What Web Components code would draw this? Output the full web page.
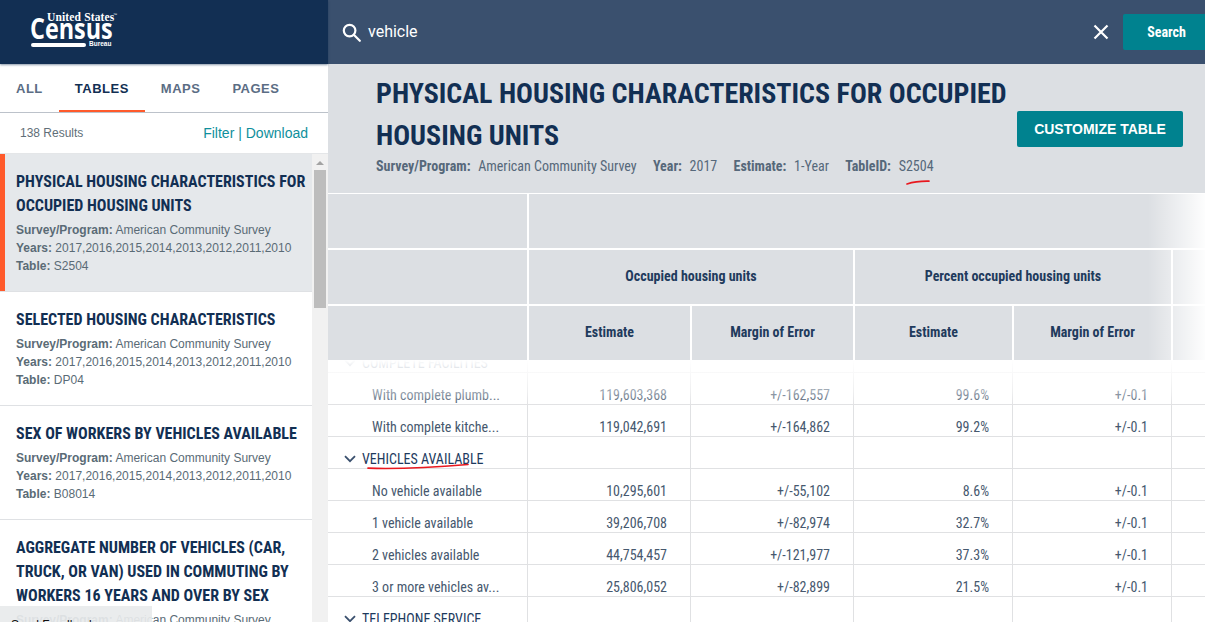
<!DOCTYPE html>
<html lang="en"><head><meta charset="utf-8"><title>Census</title>
<style>
html,body{margin:0;height:622px;overflow:hidden;background:#fff}
body{font-family:"Liberation Sans",sans-serif}
census-app{height:622px}
</style></head><body>
<census-app>
<census-logo slot="logo"></census-logo>
<search-bar slot="search" value="vehicle"></search-bar>
<result-tabs slot="tabs"></result-tabs>
<result-list slot="list">
 <result-card selected title-text="PHYSICAL HOUSING CHARACTERISTICS FOR OCCUPIED HOUSING UNITS" table="S2504"></result-card>
 <result-card title-text="SELECTED HOUSING CHARACTERISTICS" table="DP04"></result-card>
 <result-card title-text="SEX OF WORKERS BY VEHICLES AVAILABLE" table="B08014"></result-card>
 <result-card title-text="AGGREGATE NUMBER OF VEHICLES (CAR, TRUCK, OR VAN) USED IN COMMUTING BY WORKERS 16 YEARS AND OVER BY SEX" table="B08015"></result-card>
</result-list>
<table-heading slot="main"></table-heading>
<data-table slot="main"></data-table>
</census-app>
<script>
const CONDENSED='font-family:Roboto,sans-serif;font-stretch:75%;';
function shadow(el,html){el.attachShadow({mode:'open'}).innerHTML=html}
customElements.define('census-app',class extends HTMLElement{constructor(){super();shadow(this,`<style>
:host{display:grid;grid-template-columns:328px 1fr;grid-template-rows:64px 1fr;width:1205px;overflow:hidden;position:relative}
.logo{background:#122f53;box-shadow:0 1px 2px rgba(18,47,83,.5);z-index:1}
.search{background:#3a506e}
aside{display:flex;flex-direction:column;min-height:0;overflow:hidden}
main{min-width:0;min-height:0;overflow:hidden;background:#fff;display:flex;flex-direction:column}
.fb{position:absolute;left:0;bottom:0;width:152px;height:16px;background:rgba(232,234,236,.92);font:12px/12px "Liberation Sans",sans-serif;color:#111;overflow:hidden;z-index:3}
.fb span{display:block;padding:13px 0 0 11px}
</style>
<div class="logo"><slot name="logo"></slot></div><div class="search"><slot name="search"></slot></div>
<aside><slot name="tabs"></slot><slot name="list"></slot></aside><main><slot name="main"></slot></main>
<div class="fb"><span>Send Feedback</span></div>`)}});
customElements.define('census-logo',class extends HTMLElement{constructor(){super();shadow(this,`<style>
:host{display:block;position:relative;height:64px;color:#fff}
span{position:absolute;white-space:nowrap}
.us{left:47px;top:10px;font:bold 11.5px/14px "Liberation Serif",serif;letter-spacing:.15px}
.tm{left:113px;top:12px;font:4px/5px "Liberation Sans",sans-serif}
.c{left:30px;top:8px;font:bold 28px/40px "Open Sans",sans-serif;transform:scaleX(.835);transform-origin:left}
.bar{position:absolute;left:31px;top:43px;width:55px;height:4px;background:#fff;border-radius:2px}
.b{left:89px;top:40px;font:bold 6.5px/8px "Liberation Sans",sans-serif}
</style><span class="c">Census</span><span class="us">United States</span><span class="tm">™</span><i class="bar"></i><span class="b">Bureau</span>`)}});
customElements.define('search-bar',class extends HTMLElement{constructor(){super();shadow(this,`<style>
:host{display:flex;align-items:center;height:64px;padding-left:14px;color:#fff}
svg{flex:none}
.v{margin-left:7px;flex:1;font:16px/20px Roboto,sans-serif;color:#fff}
.x{margin-right:14px;display:block}
button{all:unset;box-sizing:border-box;width:82px;height:36px;padding-left:5px;background:#00828f;border-radius:2px 0 0 2px;text-align:center;color:#fff;${CONDENSED}font-weight:700;font-size:14px;line-height:32px}
</style>
<svg width="19" height="19" viewBox="0 0 19 19" fill="none" stroke="#fff" stroke-width="2.2"><circle cx="7.6" cy="7.6" r="5.8"/><path d="M11.8 11.8l6 6" stroke-linecap="round"/></svg>
<span class="v">${this.getAttribute('value')}</span>
<svg class="x" width="16" height="16" viewBox="0 0 16 16" stroke="#fff" stroke-width="2.2"><path d="M1.5 1.5l13 13M14.5 1.5l-13 13"/></svg>
<button>Search</button>`)}});
customElements.define('result-tabs',class extends HTMLElement{constructor(){super();shadow(this,`<style>
:host{display:block;background:#fff}
nav{display:flex;height:49px;box-sizing:border-box;border-bottom:1px solid #bcc2ca}
a{padding:18px 16px 0;box-sizing:border-box;height:48px;font:bold 13px/14px "Liberation Sans",sans-serif;letter-spacing:.5px;color:#5b6d84}
a.on{color:#122f53;border-bottom:2px solid #ff5a2b}
.r{display:flex;justify-content:space-between;align-items:center;height:41px;padding:0 20px;border-bottom:1px solid #e4e6e8;box-sizing:border-box}
.n{font-size:12px;color:#5f6f78}
.l{font-size:14px;color:#0f8f9c}
</style><nav><a>ALL</a><a class="on">TABLES</a><a>MAPS</a><a>PAGES</a></nav>
<div class="r"><span class="n">138 Results</span><span class="l">Filter | Download</span></div>`)}});
customElements.define('result-list',class extends HTMLElement{constructor(){super();shadow(this,`<style>
:host{display:flex;height:468px;overflow:hidden}
.items{flex:1;min-width:0}
.sb{width:16px;flex:none;background:#f1f1f1;display:flex;flex-direction:column;align-items:center}
.up{width:0;height:0;border:4px solid transparent;border-top:0;border-bottom:4px solid #a3a3a3;margin:7px 0 5px}
.th{width:12px;height:138px;background:#bdbdbd}
</style><div class="items"><slot></slot></div><div class="sb"><i class="up"></i><i class="th"></i></div>`)}});
customElements.define('result-card',class extends HTMLElement{constructor(){super();shadow(this,`<style>
:host{display:block;background:#fff;border-bottom:1px solid #dfe1e4;padding:16px 4px 16px 16px;color:#5a6b76;position:relative}
:host([selected]){background:#e5e8eb}
:host([selected])::before{content:"";position:absolute;left:0;top:0;bottom:0;width:5px;background:#ff5a2b}
h3{margin:0 0 3px;${CONDENSED}font-weight:700;font-size:16px;line-height:24px;color:#122f53}
p{margin:0;font-size:12px;line-height:18px;white-space:nowrap}
b{font-weight:700}
</style><h3>${this.getAttribute('title-text')}</h3>
<p><b>Survey/Program:</b> American Community Survey</p>
<p><b>Years:</b> 2017,2016,2015,2014,2013,2012,2011,2010</p>
<p><b>Table:</b> ${this.getAttribute('table')}</p>`)}});
customElements.define('table-heading',class extends HTMLElement{constructor(){super();shadow(this,`<style>
:host{display:flex;flex:none;box-sizing:border-box;height:129px;background:#dcdfe3;padding:9px 22px 0 48px;gap:4px;position:relative}
.t{flex:1;min-width:0}
h1{margin:0;${CONDENSED}font-weight:700;font-size:28px;line-height:42px;color:#122f53}
.m{display:flex;gap:16.3px;${CONDENSED}font-size:14px;line-height:18px;color:#56687a;white-space:nowrap}
.m b{margin-right:4.5px}
.m span{position:relative}
svg{position:absolute;left:7px;top:22px}
button{all:unset;flex:none;box-sizing:border-box;width:166px;height:36px;margin-top:38px;background:#00828f;border-radius:2px;color:#fff;text-align:center;font:bold 14px/36px "Liberation Sans",sans-serif}
</style><div class="t"><h1>PHYSICAL HOUSING CHARACTERISTICS FOR OCCUPIED HOUSING UNITS</h1>
<div class="m"><span><b>Survey/Program:</b> American Community Survey</span><span><b>Year:</b> 2017</span><span><b>Estimate:</b> 1-Year</span><span><b>TableID:</b> <span>S2504<svg width="26" height="6" viewBox="0 0 26 6" fill="none"><path d="M1 4C6 2.4 14 1 23 1.2" stroke="#e8181f" stroke-width="1.7" stroke-linecap="round"/></svg></span></span></div></div>
<button>CUSTOMIZE TABLE</button>`)}});
const ROWS=[
 ['s','COMPLETE FACILITIES'],
 ['r','With complete plumb...','119,603,368','+/-162,557','99.6%','+/-0.1'],
 ['r','With complete kitche...','119,042,691','+/-164,862','99.2%','+/-0.1'],
 ['s','VEHICLES AVAILABLE'],
 ['r','No vehicle available','10,295,601','+/-55,102','8.6%','+/-0.1'],
 ['r','1 vehicle available','39,206,708','+/-82,974','32.7%','+/-0.1'],
 ['r','2 vehicles available','44,754,457','+/-121,977','37.3%','+/-0.1'],
 ['r','3 or more vehicles av...','25,806,052','+/-82,899','21.5%','+/-0.1'],
 ['s','TELEPHONE SERVICE']];
const CHEV='<svg width="12" height="8" viewBox="0 0 12 8" fill="none" stroke="#3a506e" stroke-width="1.8"><path d="M1 1.2l5 5 5-5"/></svg>';
customElements.define('data-table',class extends HTMLElement{constructor(){super();
 const body=ROWS.map(r=>{
  if(r[0]==='s'){const mark=r[1]==='VEHICLES AVAILABLE'?'<svg class="ink" width="102" height="7" viewBox="0 0 102 7" fill="none"><path d="M1 5.2C25 6 65 4.5 101 1.5" stroke="#e8181f" stroke-width="1.7" stroke-linecap="round"/></svg>':'';
   return `<div class="c sec">${CHEV}<span class="lb">${r[1]}${mark}</span></div><div class="c"></div><div class="c"></div><div class="c"></div><div class="c"></div><div class="c"></div>`}
  return `<div class="c lab">${r[1]}</div>`+r.slice(2).map(v=>`<div class="c num">${v}</div>`).join('')+'<div class="c"></div>'}).join('');
 shadow(this,`<style>
:host{display:block;position:relative;flex:1;min-height:0;margin-top:1px;${CONDENSED}font-size:14px;overflow:hidden}
.g{display:grid}
.h{grid-template-columns:199px 161px 161px 157px 157px 1fr;gap:2px;background:#fff;grid-template-rows:54px 54px 54px;position:relative;z-index:2;height:166px}
.h div{background:#dcdfe3;display:flex;align-items:center;justify-content:center;font-weight:700;color:#1f3b5d;padding-bottom:2px;box-sizing:border-box}
.s5{grid-column:2/7}.s2{grid-column:span 2}
.fade{position:absolute;top:0;right:0;width:57px;height:166px;background:linear-gradient(90deg,rgba(255,255,255,0),rgba(255,255,255,.95));z-index:3}
.wrap{height:262px;overflow:hidden;position:relative}
.b{grid-template-columns:199px 162px 162px 158px 158px 1fr;gap:1px;background:#e0e1e3;grid-auto-rows:31px;margin-top:-19px}
.c{background:#fff;color:#46586e;line-height:18px;align-self:stretch;display:flex;align-items:flex-end;white-space:nowrap}
.lab{padding-left:44px}
.num{justify-content:flex-end;padding-right:23px}
.sec{padding-left:16px;gap:6px;color:#1d3a5e}
.sec svg:first-child{margin-bottom:5px}
.lb{position:relative}
.ink{position:absolute;left:5px;top:13px}
.top{position:absolute;left:0;right:0;top:0;height:46px;background:linear-gradient(180deg,#fff 0,rgba(255,255,255,.85) 20%,rgba(255,255,255,.45) 70%,rgba(255,255,255,0) 100%);pointer-events:none}
</style>
<div class="g h"><div></div><div class="s5"></div>
<div></div><div class="s2">Occupied housing units</div><div class="s2">Percent occupied housing units</div><div></div>
<div></div><div>Estimate</div><div>Margin of Error</div><div>Estimate</div><div>Margin of Error</div><div></div></div>
<div class="fade"></div>
<div class="wrap"><div class="g b">${body}</div><div class="top"></div></div>`)}});
</script>
</body></html>
